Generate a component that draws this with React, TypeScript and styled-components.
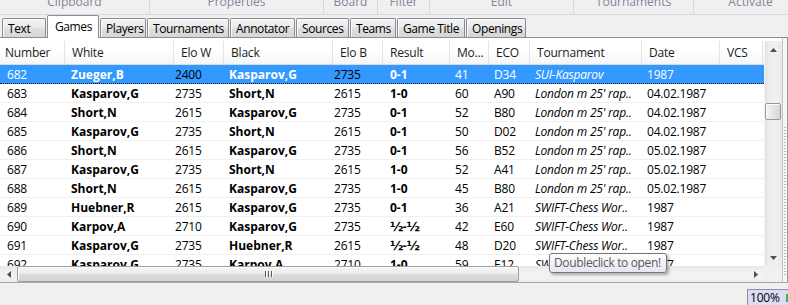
import React from 'react';
import styled, { createGlobalStyle } from 'styled-components';

const Global = createGlobalStyle`
  html, body { margin: 0; padding: 0; background: #f0f0f0; }
  body { font-family: "Open Sans", "Noto Sans", sans-serif; font-size: 12px; color: #000; }
  * { box-sizing: border-box; }
`;

type Kind = 'plain' | 'bold' | 'italic' | 'elo';
interface Col { key: string; title: string; w: number; hp: number; bp: number; kind: Kind }

const columns: Col[] = [
  { key: 'num', title: 'Number', w: 65, hp: 5, bp: 7, kind: 'plain' },
  { key: 'white', title: 'White', w: 109, hp: 7, bp: 6, kind: 'bold' },
  { key: 'eloW', title: 'Elo W', w: 50, hp: 7, bp: 1, kind: 'elo' },
  { key: 'black', title: 'Black', w: 109, hp: 7, bp: 5, kind: 'bold' },
  { key: 'eloB', title: 'Elo B', w: 50, hp: 7, bp: 1, kind: 'elo' },
  { key: 'result', title: 'Result', w: 67, hp: 7, bp: 7, kind: 'bold' },
  { key: 'moves', title: 'Mo...', w: 39, hp: 7, bp: 5, kind: 'plain' },
  { key: 'eco', title: 'ECO', w: 41, hp: 7, bp: 5, kind: 'plain' },
  { key: 'tour', title: 'Tournament', w: 112, hp: 7, bp: 5, kind: 'italic' },
  { key: 'date', title: 'Date', w: 78, hp: 7, bp: 5, kind: 'plain' },
  { key: 'vcs', title: 'VCS', w: 43, hp: 7, bp: 5, kind: 'plain' },
];
const template = columns.map((c) => `${c.w}px`).join(' ');

const L = "London m 25' rap..";
const S = 'SWIFT-Chess Wor..';
const games: string[][] = [
  ['682', 'Zueger,B', '2400', 'Kasparov,G', '2735', '0-1', '41', 'D34', 'SUI-Kasparov', '1987', ''],
  ['683', 'Kasparov,G', '2735', 'Short,N', '2615', '1-0', '60', 'A90', L, '04.02.1987', ''],
  ['684', 'Short,N', '2615', 'Kasparov,G', '2735', '0-1', '52', 'B80', L, '04.02.1987', ''],
  ['685', 'Kasparov,G', '2735', 'Short,N', '2615', '0-1', '50', 'D02', L, '04.02.1987', ''],
  ['686', 'Short,N', '2615', 'Kasparov,G', '2735', '0-1', '56', 'B52', L, '05.02.1987', ''],
  ['687', 'Kasparov,G', '2735', 'Short,N', '2615', '1-0', '52', 'A41', L, '05.02.1987', ''],
  ['688', 'Short,N', '2615', 'Kasparov,G', '2735', '1-0', '45', 'B80', L, '05.02.1987', ''],
  ['689', 'Huebner,R', '2615', 'Kasparov,G', '2735', '0-1', '36', 'A21', S, '1987', ''],
  ['690', 'Karpov,A', '2710', 'Kasparov,G', '2735', '½-½', '42', 'E60', S, '1987', ''],
  ['691', 'Kasparov,G', '2735', 'Huebner,R', '2615', '½-½', '48', 'D20', S, '1987', ''],
  ['692', 'Kasparov,G', '2735', 'Karpov,A', '2710', '1-0', '59', 'E12', S, '1987', ''],
];

const groups = [
  { label: 'Clipboard', w: 150 },
  { label: 'Properties', w: 174 },
  { label: 'Board', w: 54 },
  { label: 'Filter', w: 52 },
  { label: 'Edit', w: 144 },
  { label: 'Tournaments', w: 120 },
  { label: 'Activate', w: 113 },
];

const tabs = [
  { label: 'Text', w: 44 },
  { label: 'Games', w: 52, active: true },
  { label: 'Players', w: 46 },
  { label: 'Tournaments', w: 82 },
  { label: 'Annotator', w: 65 },
  { label: 'Sources', w: 53 },
  { label: 'Teams', w: 46 },
  { label: 'Game Title', w: 68 },
  { label: 'Openings', w: 60 },
];

const Window = styled.div`
  position: relative;
  width: 788px;
  height: 305px;
  overflow: hidden;
  display: flex;
  flex-direction: column;
  background: #f0f0f0;
`;

const RibbonBar = styled.div`
  display: flex;
  height: 15px;
  flex-shrink: 0;
  overflow: hidden;
  border-bottom: 1px solid #d6dbe2;
`;

const Group = styled.div<{ $w: number }>`
  width: ${(p) => p.$w}px;
  flex-shrink: 0;
  display: flex;
  justify-content: center;
  overflow: hidden;
  border-right: 1px solid #d9d9d9;
  color: #84869a;
  font-size: 12px;
  line-height: 16px;
  &:last-child { border-right: none; }
`;

const GroupLabel = styled.span`
  margin-top: -6px;
  white-space: nowrap;
`;

const TabStrip = styled.div`
  display: flex;
  align-items: flex-end;
  gap: 1px;
  height: 23px;
  flex-shrink: 0;
  padding-left: 2px;
  border-bottom: 1px solid #898c95;
`;

const Tab = styled.div<{ $w: number; $active?: boolean }>`
  position: relative;
  width: ${(p) => p.$w}px;
  height: ${(p) => (p.$active ? 23 : 19)}px;
  margin-bottom: ${(p) => (p.$active ? -1 : 0)}px;
  padding-left: ${(p) => (p.$active ? 7 : 5)}px;
  padding-bottom: ${(p) => (p.$active ? 2 : 0)}px;
  border: 1px solid #898c95;
  border-bottom: none;
  border-radius: 2px 2px 0 0;
  background: ${(p) =>
    p.$active ? '#ffffff' : 'linear-gradient(#f3f3f3 0%, #ebebeb 45%, #dedede 55%, #d6d6d6 100%)'};
  box-shadow: ${(p) => (p.$active ? 'none' : 'inset 1px 1px 0 #fbfbfb')};
  display: flex;
  align-items: center;
  white-space: nowrap;
  overflow: hidden;
  font-size: 12px;
  letter-spacing: -0.4px;
  color: #000;
`;

const Panel = styled.div`
  display: flex;
  flex-shrink: 0;
  border-bottom: 1px solid #a8a8a8;
`;

const Main = styled.div`
  width: 782px;
  display: flex;
  flex-direction: column;
  padding-top: 3px;
  background: #ffffff;
`;

const Splitter = styled.div`
  flex: 1;
  border-left: 1px solid #c4c4c4;
  border-right: 1px solid #9a9a9a;
  background: #f7f7f7;
  display: flex;
  justify-content: center;
  padding-top: 88px;
`;

const Grip = styled.div`
  width: 2px;
  height: 150px;
  background-image: radial-gradient(circle, #b8b8b8 0.6px, transparent 0.8px);
  background-size: 2px 3px;
`;

const ListArea = styled.div`
  display: flex;
  height: 225px;
`;

const ListGrid = styled.div`
  width: 764px;
  display: flex;
  flex-direction: column;
  overflow: hidden;
`;

const HeaderRow = styled.div`
  display: grid;
  grid-template-columns: ${template};
  height: 24px;
  flex-shrink: 0;
  border-bottom: 1px solid #dadada;
  background: linear-gradient(#ffffff 0%, #ffffff 45%, #f4f5f7 100%);
`;

const HeaderCell = styled.div<{ $pad: number }>`
  padding-left: ${(p) => p.$pad}px;
  line-height: 23px;
  border-right: 1px solid #e3e4e6;
  white-space: nowrap;
  overflow: hidden;
  color: #1b1b1b;
  letter-spacing: -0.2px;
`;

const Body = styled.div`
  flex: 1;
  overflow: hidden;
`;

const Row = styled.div<{ $sel?: boolean }>`
  display: grid;
  grid-template-columns: ${template};
  height: 19px;
  background: ${(p) => (p.$sel ? '#3399ff' : '#ffffff')};
  border-bottom: 1px ${(p) => (p.$sel ? 'dotted #111' : 'solid #f0f0f0')};
`;

const Cell = styled.div<{ $pad: number; $kind: Kind; $sel?: boolean }>`
  padding-left: ${(p) => p.$pad}px;
  padding-top: 1px;
  line-height: 17px;
  white-space: nowrap;
  overflow: hidden;
  font-weight: ${(p) => (p.$kind === 'bold' ? 700 : 400)};
  font-style: ${(p) => (p.$kind === 'italic' ? 'italic' : 'normal')};
  letter-spacing: ${(p) => (p.$kind === 'bold' ? '0' : '-0.2px')};
  color: ${(p) => (p.$sel && p.$kind !== 'elo' ? '#ffffff' : '#000000')};
`;

const Half = styled.span`
  font-family: "DejaVu Sans", sans-serif;
  font-size: 13px;
  line-height: 17px;
  letter-spacing: -0.8px;
`;

const VScroll = styled.div`
  width: 18px;
  display: flex;
  flex-direction: column;
  background: linear-gradient(to right, #e4e4e4, #eeeeee 30%, #f0f0f0 70%, #e8e8e8);
  border-left: 1px solid #f4f4f4;
`;

const ArrowBox = styled.div<{ $h: number; $w?: number }>`
  height: ${(p) => p.$h}px;
  width: ${(p) => (p.$w ? `${p.$w}px` : 'auto')};
  flex-shrink: 0;
  display: flex;
  align-items: center;
  justify-content: center;
`;

const VTrack = styled.div<{ $offset: number }>`
  flex: 1;
  padding-top: ${(p) => p.$offset}px;
`;

const VThumb = styled.div`
  height: 17px;
  margin: 0 1px 0 0;
  border: 1px solid #979797;
  border-radius: 2px;
  background: linear-gradient(to right, #f4f4f4, #e6e6e6 50%, #d5d5d5);
  box-shadow: inset 1px 1px 0 #fdfdfd;
`;

const HScrollRow = styled.div`
  display: flex;
  height: 16px;
`;

const HScroll = styled.div`
  width: 764px;
  display: flex;
  background: linear-gradient(#e6e6e6, #f1f1f1 30%, #f3f3f3 70%, #ececec);
`;

const HTrack = styled.div`
  flex: 1;
  display: flex;
`;

const HThumb = styled.div<{ $w: number }>`
  width: ${(p) => p.$w}px;
  height: 16px;
  border: 1px solid #9e9e9e;
  border-radius: 2px;
  background: linear-gradient(#f6f6f6 0%, #ececec 45%, #dcdcdc 55%, #d3d3d3 100%);
  box-shadow: inset 1px 1px 0 #fefefe;
  display: flex;
  align-items: center;
  justify-content: center;
  gap: 2px;
`;

const GripLine = styled.div`
  width: 1px;
  height: 6px;
  background: #5a5a5a;
  box-shadow: 1px 0 0 #f8f8f8;
`;

const Corner = styled.div`
  flex: 1;
  background: #f0f0f0;
`;

const StatusBar = styled.div`
  flex: 1;
  display: flex;
  justify-content: flex-end;
  align-items: flex-end;
  background: #f0f0f0;
`;

const ZoomBox = styled.div`
  width: 41px;
  height: 16px;
  flex-shrink: 0;
  display: flex;
  align-items: flex-start;
  justify-content: space-between;
  background: #dcdcf5;
  border-top: 1px solid #8e8ea0;
  border-left: 1px solid #8e8ea0;
`;

const ZoomText = styled.span`
  padding-left: 2px;
  font-size: 12px;
  line-height: 15px;
  letter-spacing: -0.2px;
  color: #000;
`;

const ZoomLevel = styled.span`
  order: 2;
  margin-left: auto;
  width: 2px;
  height: 8px;
  margin-top: 4px;
  background: #49b24a;
`;

const Tooltip = styled.div`
  position: absolute;
  left: 549px;
  top: 253px;
  width: 118px;
  height: 20px;
  padding-left: 4px;
  border: 1px solid #767676;
  border-radius: 3px;
  background: linear-gradient(#ffffff, #e4e5f0);
  box-shadow: 2px 2px 3px rgba(0, 0, 0, 0.3);
  color: #575757;
  font-size: 12px;
  line-height: 18px;
  letter-spacing: -0.35px;
  white-space: nowrap;
`;

const Arrow: React.FC<{ dir: 'up' | 'down' | 'left' | 'right' }> = ({ dir }) => {
  const pts = {
    up: '0,4 7,4 3.5,0',
    down: '0,0 7,0 3.5,4',
    left: '4,0 4,7 0,3.5',
    right: '0,0 0,7 4,3.5',
  }[dir];
  const vertical = dir === 'up' || dir === 'down';
  return (
    <svg width={vertical ? 7 : 4} height={vertical ? 4 : 7} viewBox={vertical ? '0 0 7 4' : '0 0 4 7'}>
      <polygon points={pts} fill="#4f4f4f" />
    </svg>
  );
};

const CellText: React.FC<{ text: string }> = ({ text }) => {
  if (!text.includes('½')) return <>{text}</>;
  return (
    <>
      {text.split('').map((ch, i) => (ch === '½' ? <Half key={i}>½</Half> : <span key={i}>{ch}</span>))}
    </>
  );
};

export default function App() {
  return (
    <>
      <Global />
      <Window>
        <RibbonBar>
          {groups.map((g) => (
            <Group key={g.label} $w={g.w}>
              <GroupLabel>{g.label}</GroupLabel>
            </Group>
          ))}
        </RibbonBar>
        <TabStrip>
          {tabs.map((t) => (
            <Tab key={t.label} $w={t.w} $active={t.active}>
              {t.label}
            </Tab>
          ))}
        </TabStrip>
        <Panel>
          <Main>
            <ListArea>
              <ListGrid>
                <HeaderRow>
                  {columns.map((c) => (
                    <HeaderCell key={c.key} $pad={c.hp}>
                      {c.title}
                    </HeaderCell>
                  ))}
                </HeaderRow>
                <Body>
                  {games.map((g, i) => (
                    <Row key={g[0]} $sel={i === 0}>
                      {columns.map((c, j) => (
                        <Cell key={c.key} $pad={c.bp} $kind={c.kind} $sel={i === 0}>
                          <CellText text={g[j]} />
                        </Cell>
                      ))}
                    </Row>
                  ))}
                </Body>
              </ListGrid>
              <VScroll>
                <ArrowBox $h={17}>
                  <Arrow dir="up" />
                </ArrowBox>
                <VTrack $offset={45}>
                  <VThumb />
                </VTrack>
                <ArrowBox $h={17}>
                  <Arrow dir="down" />
                </ArrowBox>
              </VScroll>
            </ListArea>
            <HScrollRow>
              <HScroll>
                <ArrowBox $h={16} $w={17}>
                  <Arrow dir="left" />
                </ArrowBox>
                <HTrack>
                  <HThumb $w={502}>
                    <GripLine />
                    <GripLine />
                    <GripLine />
                  </HThumb>
                </HTrack>
                <ArrowBox $h={16} $w={17}>
                  <Arrow dir="right" />
                </ArrowBox>
              </HScroll>
              <Corner />
            </HScrollRow>
          </Main>
          <Splitter>
            <Grip />
          </Splitter>
        </Panel>
        <StatusBar>
          <ZoomBox>
            <ZoomText>100%</ZoomText>
            <ZoomLevel />
          </ZoomBox>
        </StatusBar>
        <Tooltip>Doubleclick to open!</Tooltip>
      </Window>
    </>
  );
}
